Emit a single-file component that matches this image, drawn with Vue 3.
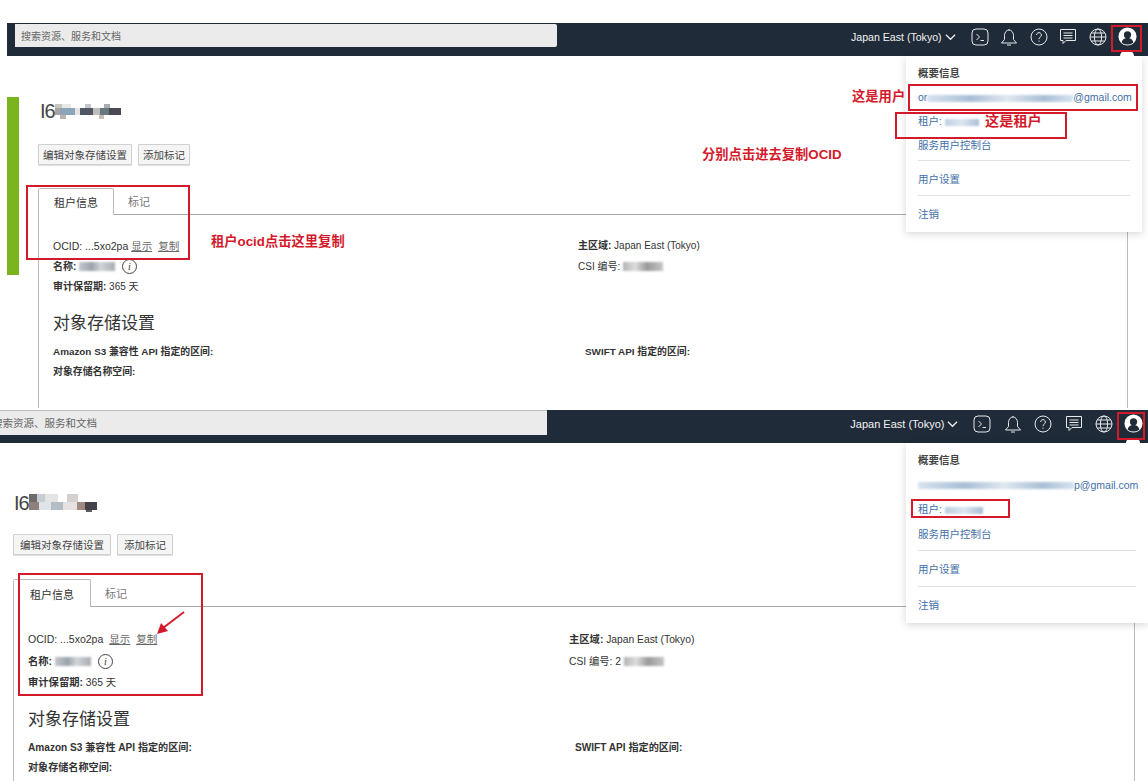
<script setup>
const shots = [
  { id: 'a', csi: 'CSI 编号:', tail: '@gmail.com', head: 'or' },
  { id: 'b', csi: 'CSI 编号: 2', tail: 'p@gmail.com', head: '' },
]
</script>

<template>
  <div class="page">
    <section v-for="shot in shots" :key="shot.id" class="shot" :class="'shot-' + shot.id">
      <header class="nav">
        <div class="search"><span>搜索资源、服务和文档</span></div>
        <div class="nav-right">
          <span class="region">Japan East (Tokyo)</span>
          <svg class="chevron" viewBox="0 0 12 8"><path d="M1 1.5 6 6.5 11 1.5" /></svg>
          <svg class="icon" viewBox="0 0 18 18"><rect x="1" y="1" width="16" height="16" rx="4" /><path d="M5.5 6 8.5 9 5.5 12M9.5 12.5H13" /></svg>
          <svg class="icon" viewBox="0 0 18 18"><path d="M1.500 15h15l-3-3.500V7.500a4.500 5.500 0 0 0-9 0v4zM7 17h4M9 1v1" /></svg>
          <svg class="icon" viewBox="0 0 18 18"><circle cx="9" cy="9" r="8" /><path d="M6.600 7a2.400 2.400 0 1 1 3.600 2.100c-.8.500-1.200 1-1.200 2M9 12.600v1.200" /></svg>
          <svg class="icon" viewBox="0 0 18 18"><path d="M1.500 1.500h15v11H7l-3 3v-3H1.500zM4.500 5h9M4.500 7.500h9M4.500 10h9" /></svg>
          <svg class="icon" viewBox="0 0 18 18"><circle cx="9" cy="9" r="8" /><ellipse cx="9" cy="9" rx="3.600" ry="8" /><path d="M1 9h16M2.200 5h13.600M2.200 13h13.600" /></svg>
          <svg class="avatar" viewBox="0 0 20 20"><circle cx="10" cy="10" r="9.500" fill="#fff" /><circle cx="10" cy="8.200" r="3.800" fill="#1f2b38" /><path d="M3.800 16.200c1-3.600 3.400-4.600 6.200-4.600s5.200 1 6.200 4.600a9.500 9.500 0 0 1-12.400 0z" fill="#1f2b38" /></svg>
        </div>
      </header>

      <div class="body">
        <div class="accent"></div>
        <main class="content">
          <div class="title">I6<span class="title-mosaic"></span></div>
          <div class="actions">
            <button>编辑对象存储设置</button>
            <button>添加标记</button>
          </div>
          <div class="tabs">
            <div class="tab active">租户信息</div>
            <div class="tab">标记</div>
          </div>
          <div class="panel">
            <div class="info">
              <div class="col">
                <p class="ocid"><b class="plain">OCID:</b> ...5xo2pa <a>显示</a> <a>复制</a></p>
                <p><b>名称:</b> <span class="smudge name-smudge"></span> <i class="info-dot">i</i></p>
                <p><b>审计保留期:</b> 365 天</p>
              </div>
              <div class="col">
                <p><b>主区域:</b> Japan East (Tokyo)</p>
                <p><b class="plain">{{ shot.csi }}</b> <span class="smudge csi-smudge"></span></p>
              </div>
            </div>
            <h2>对象存储设置</h2>
            <div class="info storage">
              <div class="col">
                <p><b>Amazon S3 兼容性 API 指定的区间:</b></p>
                <p><b>对象存储名称空间:</b></p>
              </div>
              <div class="col">
                <p><b>SWIFT API 指定的区间:</b></p>
              </div>
            </div>
          </div>
        </main>
      </div>

      <aside class="menu">
        <div class="menu-item menu-title">概要信息</div>
        <div class="menu-item link">{{ shot.head }}<span class="smudge mail-smudge"></span>{{ shot.tail }}</div>
        <div class="menu-item link">租户: <span class="smudge tenant-smudge"></span></div>
        <div class="menu-item link">服务用户控制台</div>
        <hr />
        <div class="menu-item link">用户设置</div>
        <hr />
        <div class="menu-item link">注销</div>
      </aside>
      <div class="caret"></div>

      <div class="box box-avatar"></div>
      <div class="box box-tenant"></div>
      <div class="box box-tabs"></div>
      <template v-if="shot.id === 'a'">
        <div class="box box-mail"></div>
        <span class="note note-user">这是用户</span>
        <span class="note note-tenant">这是租户</span>
        <span class="note note-copy">分别点击进去复制OCID</span>
        <span class="note note-ocid">租户ocid点击这里复制</span>
      </template>
      <svg v-else class="arrow" viewBox="0 0 30 26">
        <path d="M28 2 7 18" />
        <path class="arrow-head" d="M1 24 5 13 12 21z" />
      </svg>
    </section>
  </div>
</template>

<style scoped>
.page {
  width: 1148px;
  height: 781px;
  overflow: hidden;
  background: #fff;
  color: #333;
  font-family: "Liberation Sans", "Noto Sans CJK SC", sans-serif;
  font-size: 10.5px;
}

.shot {
  position: relative;
  display: flex;
  flex-direction: column;
  box-sizing: border-box;
}

.shot-a {
  height: 408px;
  padding-top: 23px;
}

.shot-b {
  height: 373px;
  padding-top: 2px;
}

.nav {
  display: flex;
  justify-content: space-between;
  height: 33px;
  flex-shrink: 0;
  background: #1f2b38;
}

.shot-a .nav {
  margin-left: 7px;
  padding-left: 8px;
}

.search {
  background: #ebebeb;
  color: #666;
  display: flex;
  align-items: center;
  overflow: hidden;
  box-sizing: border-box;
  white-space: nowrap;
}

.shot-a .search {
  width: 542px;
  height: 23px;
  margin-top: 1px;
  padding-left: 6px;
  font-size: 10px;
  border-radius: 0 2px 2px 0;
}

.shot-b .search {
  width: 547px;
  height: 25px;
  padding-bottom: 2px;
  border-top: 1px solid #bbb;
}

.shot-b .search span {
  margin-left: -8px;
}

.nav-right {
  display: flex;
  align-items: center;
  padding-bottom: 6px;
  color: #f2f2f2;
}

.shot-a .nav-right {
  padding-right: 11px;
  font-size: 10.6px;
}

.shot-b .nav-right {
  padding-right: 5px;
  font-size: 11px;
}

.chevron {
  width: 11px;
  height: 8px;
  margin-left: 3px;
  fill: none;
  stroke: #f2f2f2;
  stroke-width: 1.3;
}

.icon {
  width: 18px;
  height: 18px;
  margin-left: 11.6px;
  fill: none;
  stroke: #e6e8ea;
  stroke-width: 1;
}

.shot-b .icon {
  margin-left: 12.4px;
}

.nav-right .chevron + .icon {
  margin-left: 15px;
}

.avatar {
  width: 19px;
  height: 19px;
  margin-left: 11px;
}

.body {
  display: flex;
  align-items: flex-start;
  flex: 1;
  min-height: 0;
}

.accent {
  width: 12px;
  height: 178px;
  margin: 41px 0 0 7px;
  background: #7ab51d;
  flex-shrink: 0;
}

.shot-b .accent {
  display: none;
}

.content {
  flex: 1;
  min-width: 0;
  height: 100%;
  display: flex;
  flex-direction: column;
  box-sizing: border-box;
}

.shot-a .content {
  padding: 43px 20px 0 19px;
}

.shot-b .content {
  padding: 48px 13px 0 13px;
}

.title {
  height: 24px;
  line-height: 24px;
  font-size: 20px;
  letter-spacing: -1px;
  padding-left: 2px;
  color: #444;
  display: flex;
  align-items: center;
}

.shot-b .title {
  padding-left: 1px;
}

/* pixelated tenant name, rows of blocks */
.title-mosaic {
  display: inline-block;
  width: 66px;
  height: 15px;
  background:
    linear-gradient(90deg, #c9c5bf 0 10%, #e8e8e8 10% 24%, #fff 24% 46%, #c4c8cc 46% 54%, #fff 54% 74%, #a8adb3 74% 84%, #fff 84% 100%) 0 0 / 100% 4px no-repeat,
    linear-gradient(90deg, #a8a39c 0 8%, #8ea4b8 8% 30%, #e4e4e4 30% 38%, #4f5862 38% 58%, #bdbdb8 58% 68%, #67787f 68% 82%, #474a51 82% 100%) 0 4px / 100% 7px no-repeat,
    linear-gradient(90deg, #fff 0 8%, #b9b4ab 8% 16%, #fff 16% 66%, #c9bdb6 66% 74%, #fff 74% 100%) 0 11px / 100% 4px no-repeat;
}

.shot-b .title-mosaic {
  width: 68px;
  height: 18px;
  background:
    linear-gradient(90deg, #6f6b6a 0 12%, #c6cdd4 12% 24%, #e4e4e4 24% 42%, #fff 42% 56%, #d4d0d0 56% 72%, #fff 72% 100%) 0 0 / 100% 8px no-repeat,
    linear-gradient(90deg, #8c827b 0 14%, #dfe4e9 14% 32%, #b4bcc4 32% 50%, #e6e2e2 50% 70%, #a08a80 70% 82%, #45414a 82% 100%) 0 8px / 100% 8px no-repeat,
    linear-gradient(90deg, #fff 0 84%, #5e5a5e 84% 92%, #fff 92% 100%) 0 16px / 100% 2px no-repeat;
}

.actions {
  display: flex;
  gap: 6px;
}

.shot-a .actions {
  margin-top: 21px;
}

.shot-b .actions {
  margin-top: 19px;
}

button {
  height: 21px;
  background: #f5f5f5;
  border: 1px solid #d0d0d0;
  border-radius: 1px;
  box-shadow: 0 1px 1px #ddd;
  color: #444;
  font: inherit;
}

.shot-a button {
  padding: 0 4px;
}

.shot-b button {
  padding: 0 6px;
}

.tabs {
  display: flex;
  flex-shrink: 0;
  border-bottom: 1px solid #aaa;
}

.shot-a .tabs {
  height: 26px;
  margin-top: 23px;
}

.shot-b .tabs {
  height: 27px;
  margin-top: 24px;
}

.tab {
  padding: 0 14px;
  font-size: 11px;
  color: #777;
  display: flex;
  align-items: center;
}

.tab.active {
  padding: 0 15px;
  color: #333;
  background: #fff;
  border: 1px solid #bbb;
  border-bottom: none;
  border-radius: 2px 2px 0 0;
  margin-bottom: -1px;
}

.shot-b .tab.active {
  padding: 0 16px;
}

.panel {
  flex: 1;
  min-height: 0;
  border-left: 1px solid #bbb;
  border-right: 1px solid #bbb;
  padding-left: 14px;
}

.info {
  display: grid;
}

.shot-a .info {
  grid-template-columns: 525px 1fr;
  padding-top: 21px;
  font-size: 10px;
}

.shot-b .info {
  grid-template-columns: 541px 1fr;
  padding-top: 22px;
  font-size: 10.3px;
}

.shot-a .storage {
  grid-template-columns: 532px 1fr;
  padding-top: 6px;
  font-size: 9.9px;
}

.shot-b .storage {
  grid-template-columns: 547px 1fr;
  padding-top: 6px;
  font-size: 10.1px;
}

p {
  margin: 0;
  line-height: 20.5px;
  white-space: nowrap;
}

.shot-a .ocid,
.shot-b .ocid {
  font-size: 10.5px;
}

.shot-b .info p {
  line-height: 21.5px;
}

.shot-a .storage p,
.shot-b .storage p {
  line-height: 20px;
}

.plain {
  font-weight: 400;
}

a {
  color: #666;
  text-decoration: underline;
}

a + a {
  margin-left: 3px;
}

.shot-b a {
  margin-left: 3px;
}

h2 {
  margin: 14px 0 0;
  height: 24px;
  line-height: 24px;
  font-size: 17px;
  font-weight: 400;
  color: #333;
}

.smudge {
  display: inline-block;
  vertical-align: middle;
  height: 9px;
  filter: blur(1px);
}

.name-smudge {
  width: 36px;
  background: linear-gradient(90deg, #c3c7cc, #9aa2aa 35%, #d2d5d8 60%, #a7adb3);
}

.csi-smudge {
  width: 40px;
  background: linear-gradient(90deg, #b3b3b3, #dddddd 30%, #999999 60%, #c6c6c6);
}

.mail-smudge {
  width: 146px;
  height: 7px;
  background: linear-gradient(90deg, #d7e3ef, #a9bed6 30%, #e0e8f0 55%, #a9bed6 80%, #d7e3ef);
}

.shot-b .mail-smudge {
  width: 156px;
}

.tenant-smudge {
  width: 34px;
  height: 7px;
  background: linear-gradient(90deg, #bfcfe0, #dce6f0 50%, #a9bed6);
}

.shot-b .tenant-smudge {
  width: 38px;
}

.info-dot {
  display: inline-flex;
  align-items: center;
  justify-content: center;
  width: 13px;
  height: 13px;
  margin-left: 4px;
  border: 1px solid #444;
  border-radius: 50%;
  font-family: "Liberation Serif", serif;
  font-size: 10px;
  vertical-align: middle;
}

.menu {
  position: absolute;
  left: 906px;
  padding: 5px 12px 6px;
  box-sizing: border-box;
  background: #fff;
  box-shadow: 0 2px 8px rgba(0, 0, 0, 0.16);
}

.shot-a .menu {
  top: 56px;
  width: 236px;
}

.shot-b .menu {
  top: 35px;
  width: 242px;
}

.menu-item {
  height: 24px;
  line-height: 24px;
  white-space: nowrap;
}

.shot-b .menu-item {
  height: 24.5px;
  line-height: 24.5px;
}

.menu-title {
  font-weight: 700;
  color: #444;
}

.link {
  color: #3f6ea8;
}

hr {
  margin: 3px 0 6px;
  border: none;
  border-top: 1px solid #e2e2e2;
}

.shot-a hr + .link + hr {
  margin-top: 4px;
}

.shot-b hr {
  margin: 4px 0 6px;
}

.caret {
  position: absolute;
  width: 14px;
  height: 5px;
  background: #fff;
  border-radius: 7px 7px 0 0;
}

.shot-a .caret {
  left: 1120px;
  top: 51px;
}

.shot-b .caret {
  left: 1126px;
  top: 30px;
}

.box {
  position: absolute;
  border: 2px solid #d4192b;
  box-sizing: border-box;
}

.shot-a .box-avatar {
  left: 1111px;
  top: 25px;
  width: 31px;
  height: 27px;
}

.shot-b .box-avatar {
  left: 1117px;
  top: 4px;
  width: 28px;
  height: 28px;
}

.box-mail {
  left: 908px;
  top: 84px;
  width: 230px;
  height: 27px;
}

.shot-a .box-tenant {
  left: 895px;
  top: 112px;
  width: 172px;
  height: 27px;
}

.shot-b .box-tenant {
  left: 911px;
  top: 91px;
  width: 99px;
  height: 19px;
}

.shot-a .box-tabs {
  left: 26px;
  top: 185px;
  width: 164px;
  height: 75px;
}

.shot-b .box-tabs {
  left: 18px;
  top: 165px;
  width: 185px;
  height: 123px;
}

.note {
  position: absolute;
  color: #d4192b;
  font-weight: 700;
  font-size: 13.300px;
  line-height: 18px;
  white-space: nowrap;
}

.note-user {
  left: 852px;
  top: 88px;
}

.note-tenant {
  left: 985px;
  top: 112px;
  font-size: 14.200px;
}

.note-copy {
  left: 702px;
  top: 146px;
}

.note-ocid {
  left: 211px;
  top: 233px;
}

.arrow {
  position: absolute;
  left: 156px;
  top: 202px;
  width: 30px;
  height: 26px;
  fill: none;
  stroke: #d4192b;
  stroke-width: 2;
}

.arrow-head {
  fill: #d4192b;
  stroke: none;
}
</style>
